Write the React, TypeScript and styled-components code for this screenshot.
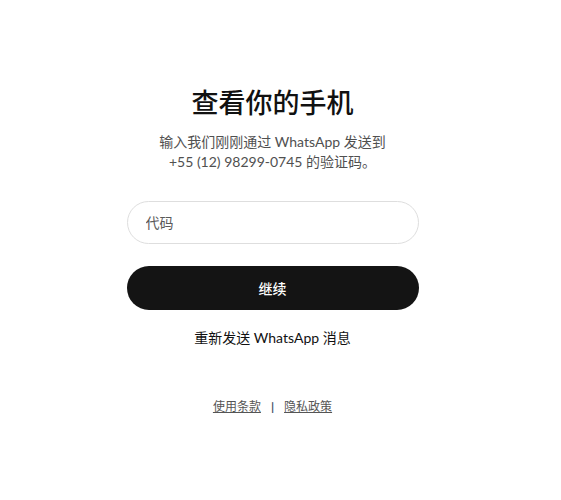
import styled, { createGlobalStyle } from "styled-components";

const Global = createGlobalStyle`
  body {
    margin: 0;
    background: #ffffff;
    font-family: "Lato", "Noto Sans CJK SC", sans-serif;
  }
`;

const Page = styled.main`
  display: flex;
  flex-direction: column;
  align-items: center;
  padding: 85px 16px 0 0;
`;

const Title = styled.h1`
  margin: 0 0 11px;
  font-size: 27px;
  line-height: 36px;
  font-weight: 500;
  color: #111111;
`;

const Subtitle = styled.p`
  margin: 0 0 29px;
  font-size: 14px;
  line-height: 20px;
  color: #505050;
  text-align: center;
`;

const Form = styled.form`
  display: flex;
  flex-direction: column;
  gap: 22px;
  width: 292px;
`;

const CodeInput = styled.input`
  box-sizing: border-box;
  height: 43px;
  width: 100%;
  padding: 0 18px;
  border: 1px solid #dedede;
  border-radius: 22px;
  font: inherit;
  font-size: 14px;
  color: #111;
  outline: none;
  &::placeholder {
    color: #5a5a5a;
  }
`;

const Continue = styled.button`
  height: 44px;
  width: 100%;
  border: none;
  border-radius: 22px;
  background: #141414;
  color: #ffffff;
  font: inherit;
  font-size: 14px;
  font-weight: 500;
`;

const Resend = styled.a`
  margin-top: 18px;
  font-size: 14px;
  line-height: 20px;
  font-weight: 400;
  color: #111111;
  text-decoration: none;
`;

const Footer = styled.footer`
  display: flex;
  align-items: center;
  gap: 10px;
  margin-top: 50px;
  font-size: 12px;
  line-height: 18px;
`;

const FooterLink = styled.a`
  color: #555555;
  text-decoration: underline;
`;

const Sep = styled.span`
  color: #4a5468;
  font-weight: 700;
`;

export default function App() {
  return (
    <>
      <Global />
      <Page>
        <Title>查看你的手机</Title>
        <Subtitle>
          输入我们刚刚通过 WhatsApp 发送到
          <br />
          +55 (12) 98299-0745 的验证码。
        </Subtitle>
        <Form onSubmit={(e) => e.preventDefault()}>
          <CodeInput placeholder="代码" />
          <Continue type="submit">继续</Continue>
        </Form>
        <Resend href="#">重新发送 WhatsApp 消息</Resend>
        <Footer>
          <FooterLink href="#">使用条款</FooterLink>
          <Sep>|</Sep>
          <FooterLink href="#">隐私政策</FooterLink>
        </Footer>
      </Page>
    </>
  );
}
